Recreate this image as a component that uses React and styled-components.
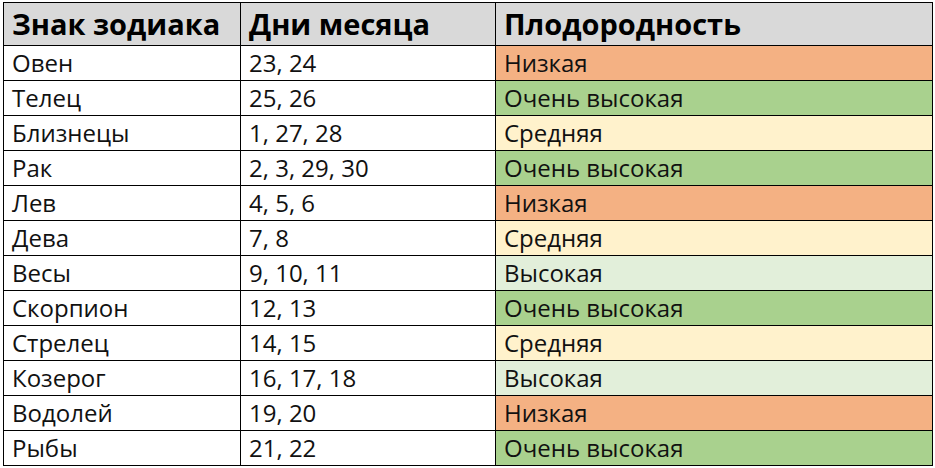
import styled, { createGlobalStyle } from "styled-components";

const GlobalStyle = createGlobalStyle`
	html, body {
		margin: 0;
		padding: 0;
		background: #ffffff;
	}
	body {
		font-family: "Open Sans", "Liberation Sans", sans-serif;
		color: #000000;
	}
`;

const fertilityColors = {
	"Низкая": "#f4b183",
	"Очень высокая": "#a9d18e",
	"Средняя": "#fff2cc",
	"Высокая": "#e2efda",
};

const rows = [
	["Овен", "23, 24", "Низкая"],
	["Телец", "25, 26", "Очень высокая"],
	["Близнецы", "1, 27, 28", "Средняя"],
	["Рак", "2, 3, 29, 30", "Очень высокая"],
	["Лев", "4, 5, 6", "Низкая"],
	["Дева", "7, 8", "Средняя"],
	["Весы", "9, 10, 11", "Высокая"],
	["Скорпион", "12, 13", "Очень высокая"],
	["Стрелец", "14, 15", "Средняя"],
	["Козерог", "16, 17, 18", "Высокая"],
	["Водолей", "19, 20", "Низкая"],
	["Рыбы", "21, 22", "Очень высокая"],
];

const Page = styled.div`
	padding: 2px 3px;
`;

const Table = styled.div`
	display: grid;
	grid-template-columns: 237px 255px 437px;
	grid-template-rows: 43px;
	grid-auto-rows: 35px;
	width: 929px;
	border-top: 1px solid #000;
	border-left: 1px solid #000;
`;

const Cell = styled.div`
	display: flex;
	align-items: center;
	padding: 0 0 2px 8px;
	border-right: 1px solid #000;
	border-bottom: 1px solid #000;
	background: ${(p) => p.$bg || "#ffffff"};
	font-size: ${(p) => (p.$head ? "29px" : "24px")};
	font-weight: ${(p) => (p.$head ? 700 : 400)};
	color: ${(p) => (p.$head ? "#000000" : "#111111")};
	white-space: nowrap;
	overflow: hidden;
`;

export default function App() {
	return (
		<Page>
			<GlobalStyle />
			<Table>
				<Cell $head $bg="#d9d9d9">Знак зодиака</Cell>
				<Cell $head $bg="#d9d9d9">Дни месяца</Cell>
				<Cell $head $bg="#d9d9d9">Плодородность</Cell>
				{rows.map(([sign, days, level]) => [
					<Cell key={sign + "-s"}>{sign}</Cell>,
					<Cell key={sign + "-d"}>{days}</Cell>,
					<Cell key={sign + "-l"} $bg={fertilityColors[level]}>
						{level}
					</Cell>,
				])}
			</Table>
		</Page>
	);
}
